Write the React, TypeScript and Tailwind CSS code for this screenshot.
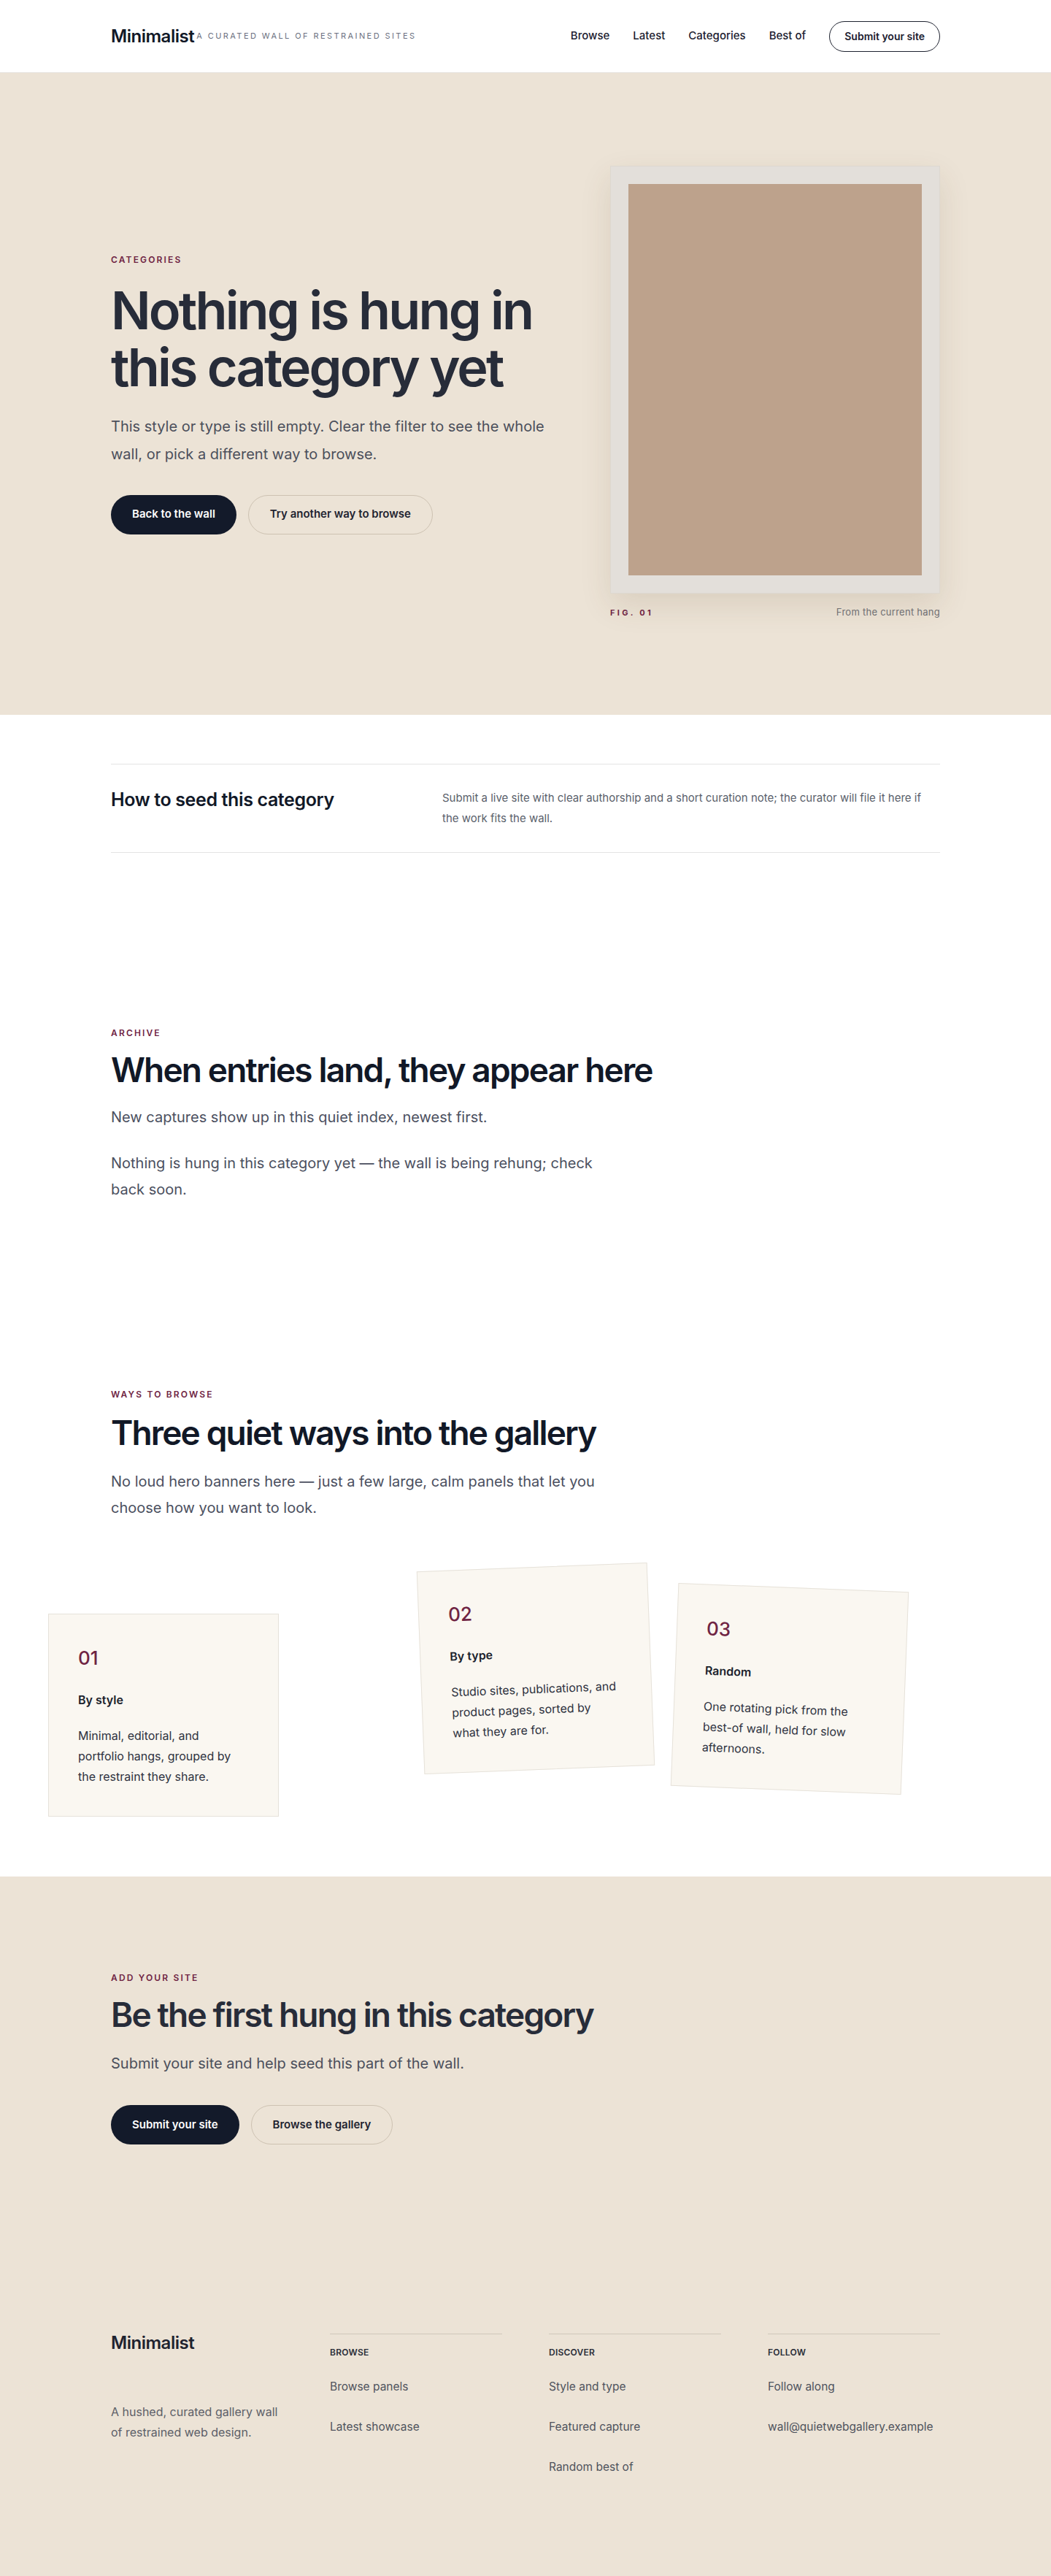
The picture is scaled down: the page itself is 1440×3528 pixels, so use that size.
import React from "react";

const nav = ["Browse", "Latest", "Categories", "Best of"];

const panels = [
  {
    n: "01",
    title: "By style",
    body: "Minimal, editorial, and portfolio hangs, grouped by the restraint they share.",
    tilt: "translate-x-[-86px] translate-y-[64px]",
  },
  {
    n: "02",
    title: "By type",
    body: "Studio sites, publications, and product pages, sorted by what they are for.",
    tilt: "translate-x-[14px] rotate-[-2.2deg]",
  },
  {
    n: "03",
    title: "Random",
    body: "One rotating pick from the best-of wall, held for slow afternoons.",
    tilt: "translate-x-[-48px] translate-y-[28px] rotate-[2.2deg]",
  },
];

const footerCols = [
  { head: "Browse", links: ["Browse panels", "Latest showcase"] },
  { head: "Discover", links: ["Style and type", "Featured capture", "Random best of"] },
  { head: "Follow", links: ["Follow along", "wall@quietwebgallery.example"] },
];

function Eyebrow({ children }: { children: React.ReactNode }) {
  return (
    <p className="text-xs font-semibold uppercase leading-4 tracking-[0.18em] text-[#6f2443]">
      {children}
    </p>
  );
}

function PillLink({ dark, children }: { dark?: boolean; children: React.ReactNode }) {
  return (
    <a
      href="#"
      className={
        dark
          ? "inline-flex h-[54px] items-center rounded-full bg-[#131a2a] px-[29px] text-[15px] font-semibold text-white"
          : "inline-flex h-[54px] items-center rounded-full border border-[#cdc2b2] px-[29px] text-[15px] font-semibold text-[#1f2330]"
      }
    >
      {children}
    </a>
  );
}

function Header() {
  return (
    <header className="border-b border-[#e4e1db] bg-white">
      <div className="mx-auto flex h-[99px] max-w-[1136px] items-center justify-between">
        <div className="flex items-center gap-[3px]">
          <span className="text-2xl font-semibold tracking-[-0.02em] text-[#111827]">Minimalist</span>
          <span className="text-[11px] uppercase tracking-[0.22em] text-[#6b7080]">
            A curated wall of restrained sites
          </span>
        </div>
        <nav className="flex items-center gap-8 text-[15px] font-medium text-[#1c2030]">
          {nav.map((item) => (
            <a key={item} href="#">
              {item}
            </a>
          ))}
          <a
            href="#"
            className="inline-flex h-[42px] items-center rounded-full border border-[#1f2330] px-5 text-sm font-semibold"
          >
            Submit your site
          </a>
        </nav>
      </div>
    </header>
  );
}

function Hero() {
  return (
    <section className="bg-[#ece3d6]">
      <div className="mx-auto grid h-[879px] max-w-[1136px] grid-cols-[1fr_452px]">
        <div className="self-center">
          <Eyebrow>Categories</Eyebrow>
          <h1 className="mt-[22px] max-w-[640px] text-7xl font-semibold leading-[78px] tracking-[-0.04em] text-[#272c39]">
            Nothing is hung in this category yet
          </h1>
          <p className="mt-[23px] max-w-[620px] text-xl leading-[38px] text-[#4b4f5b]">
            This style or type is still empty. Clear the filter to see the whole wall, or pick a
            different way to browse.
          </p>
          <div className="mt-[37px] flex gap-4">
            <PillLink dark>Back to the wall</PillLink>
            <PillLink>Try another way to browse</PillLink>
          </div>
        </div>
        <figure className="self-start pt-[127px]">
          <div className="border border-[#ddd8d0] bg-[#e3dfda] p-6 shadow-[0_16px_40px_rgba(90,65,35,0.12)]">
            <div className="aspect-[3/4] bg-[#bda28c]" />
          </div>
          <figcaption className="mt-4 flex items-center justify-between">
            <span className="text-[11px] font-bold uppercase tracking-[0.3em] text-[#6f2443]">Fig. 01</span>
            <span className="text-[13px] tracking-[0.02em] text-[#6f6f72]">From the current hang</span>
          </figcaption>
        </figure>
      </div>
    </section>
  );
}

function SeedNote() {
  return (
    <section className="mx-auto max-w-[1136px] pt-[67px]">
      <div className="grid grid-cols-[454px_1fr] border-y border-[#e3e3e3] py-8">
        <h2 className="text-[25px] font-semibold leading-8 tracking-[-0.015em] text-[#111827]">
          How to seed this category
        </h2>
        <p className="text-[15px] leading-7 text-[#5a5f6b]">
          Submit a live site with clear authorship and a short curation note; the curator will file it
          here if the work fits the wall.
        </p>
      </div>
    </section>
  );
}

function Archive() {
  return (
    <section className="mx-auto max-w-[1136px] pt-[239px]">
      <Eyebrow>Archive</Eyebrow>
      <h2 className="mt-[17px] text-[46px] font-semibold leading-[50px] tracking-[-0.04em] text-[#111827]">
        When entries land, they appear here
      </h2>
      <p className="mt-[22px] text-xl leading-9 text-[#4b5060]">
        New captures show up in this quiet index, newest first.
      </p>
      <p className="mt-[27px] max-w-2xl text-xl leading-9 text-[#4b5060]">
        Nothing is hung in this category yet — the wall is being rehung; check back soon.
      </p>
    </section>
  );
}

function Ways() {
  return (
    <section className="mx-auto max-w-[1136px] pb-[146px] pt-[255px]">
      <Eyebrow>Ways to browse</Eyebrow>
      <h2 className="mt-[19px] text-[46px] font-semibold leading-[50px] tracking-[-0.04em] text-[#111827]">
        Three quiet ways into the gallery
      </h2>
      <p className="mt-6 max-w-2xl text-xl leading-9 text-[#4b5060]">
        No loud hero banners here — just a few large, calm panels that let you choose how you want to
        look.
      </p>
      <div className="mt-[63px] grid grid-cols-3 items-start gap-[94px]">
        {panels.map((p) => (
          <div key={p.n} className={`border border-[#e6e2da] bg-[#faf7f1] p-10 ${p.tilt}`}>
            <div className="text-[26px] font-medium leading-[39px] text-[#6f2443]">{p.n}</div>
            <h3 className="mt-[26px] text-base font-semibold leading-6 text-[#1a1f2c]">{p.title}</h3>
            <p className="mt-[23px] max-w-[228px] text-base leading-7 text-[#2e3240]">{p.body}</p>
          </div>
        ))}
      </div>
    </section>
  );
}

function Cta() {
  return (
    <section className="mx-auto max-w-[1136px] pt-[131px]">
      <Eyebrow>Add your site</Eyebrow>
      <h2 className="mt-[17px] text-[46px] font-semibold leading-[50px] tracking-[-0.04em] text-[#272c39]">
        Be the first hung in this category
      </h2>
      <p className="mt-[24px] text-xl leading-9 text-[#4b4f5b]">
        Submit your site and help seed this part of the wall.
      </p>
      <div className="mt-[39px] flex gap-4">
        <PillLink dark>Submit your site</PillLink>
        <PillLink>Browse the gallery</PillLink>
      </div>
    </section>
  );
}

function Footer() {
  return (
    <footer className="mx-auto grid max-w-[1136px] grid-cols-4 gap-16 pb-[138px] pt-[256px]">
      <div>
        <div className="text-2xl font-semibold leading-8 tracking-[-0.02em] text-[#1f2330]">Minimalist</div>
        <p className="mt-[64px] text-base leading-7 text-[#5c5f68]">
          A hushed, curated gallery wall of restrained web design.
        </p>
      </div>
      {footerCols.map((col) => (
        <div key={col.head} className="mt-[3px] border-t border-[#cfc7ba] pt-[17px]">
          <h4 className="text-xs font-semibold uppercase leading-4 tracking-[0.02em] text-[#2a2e38]">
            {col.head}
          </h4>
          <ul className="mt-[27px] flex flex-col gap-[31px] text-[15.5px] leading-6 text-[#4f535d]">
            {col.links.map((l) => (
              <li key={l}>
                <a href="#">{l}</a>
              </li>
            ))}
          </ul>
        </div>
      ))}
    </footer>
  );
}

export default function App() {
  return (
    <div className="min-h-screen bg-white font-['Inter',sans-serif] text-[#111827]">
      <Header />
      <Hero />
      <SeedNote />
      <Archive />
      <Ways />
      <div className="bg-[#ece3d6]">
        <Cta />
        <Footer />
      </div>
    </div>
  );
}
